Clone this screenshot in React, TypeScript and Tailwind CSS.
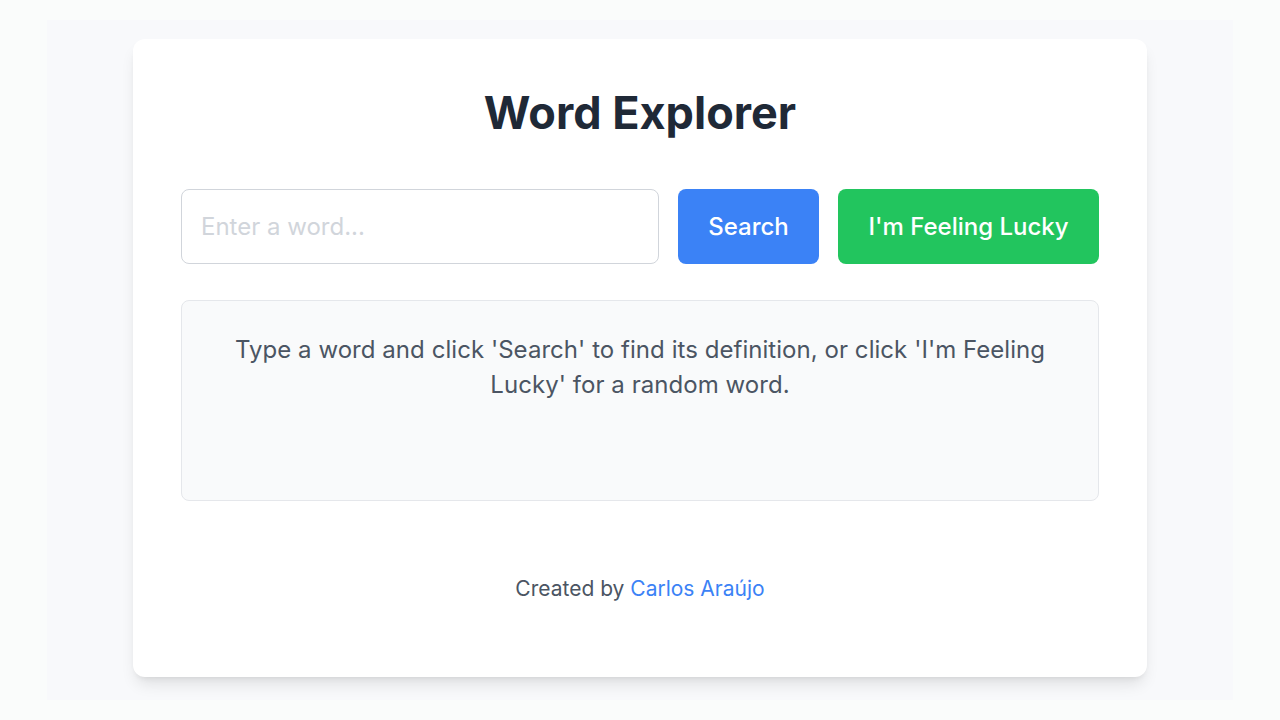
import React from "react";

export default function App() {
  return (
    <div className="w-[1280px] h-[720px] bg-[#fafcfb] pt-[20px] pl-[47px]" style={{ fontFamily: "Inter, 'Noto Sans', sans-serif" }}>
      <div className="w-[1186px] h-[680px] bg-[#f8f9fb] pt-[19px] pl-[86px]">
        <div className="w-[1014px] h-[638px] bg-white rounded-[12px] shadow-[0_10px_15px_-3px_rgba(0,0,0,0.1),0_4px_6px_-4px_rgba(0,0,0,0.1)] px-[48px] pt-[46px] flex flex-col">
          <h1 className="text-center text-[45px] leading-[56px] font-bold text-[#1f2937]">Word Explorer</h1>
          <div className="flex gap-[19px] mt-[48px]">
            <input
              className="w-[478px] h-[75px] border border-[#d1d5db] rounded-[8px] px-[19px] text-[24px] text-[#1f2937] placeholder:text-[#d1d5db] outline-none"
              placeholder="Enter a word..."
            />
            <button className="w-[141px] h-[75px] bg-[#3b82f6] rounded-[8px] text-white text-[24px] font-medium">Search</button>
            <button className="w-[261px] h-[75px] bg-[#22c55e] rounded-[8px] text-white text-[24px] font-medium">I'm Feeling Lucky</button>
          </div>
          <div className="mt-[36px] h-[201px] bg-[#f9fafb] border border-[#e5e7eb] rounded-[8px] px-[40px] pt-[31px] text-center text-[24px] leading-[35px] tracking-[0.05px] text-[#4b5563]">
            Type a word and click 'Search' to find its definition, or click 'I'm Feeling Lucky' for a random word.
          </div>
          <div className="mt-[74px] text-center text-[21px] leading-[28px] text-[#4b5563]">
            Created by <a className="text-[#3b82f6]" href="#">Carlos Araújo</a>
          </div>
        </div>
      </div>
    </div>
  );
}
